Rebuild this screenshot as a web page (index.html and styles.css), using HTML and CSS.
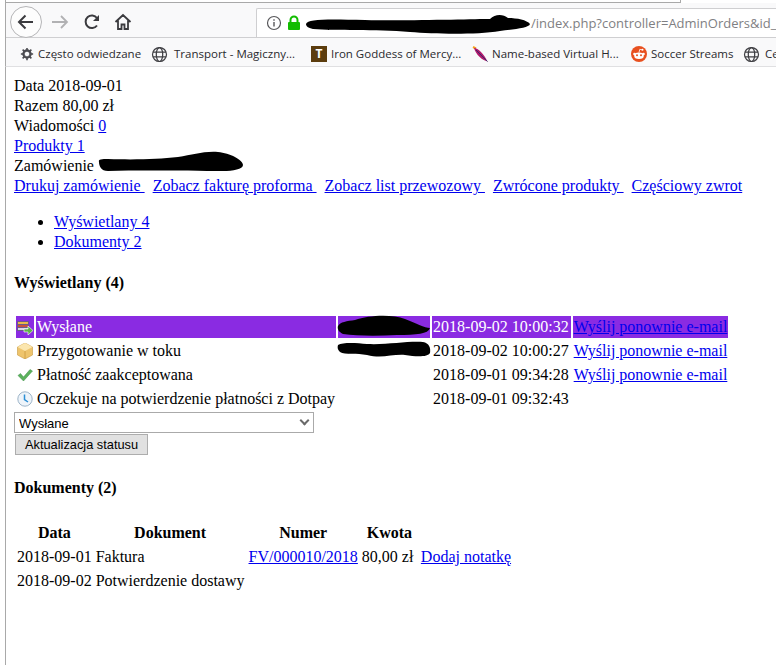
FILE: index.html
```html
<!DOCTYPE html>
<html lang="en">
<head>
    <meta charset="UTF-8">
    <meta name="viewport" content="width=device-width, initial-scale=1.0">
    <title>Zamówienie</title>
    <link rel="stylesheet" href="styles.css">
</head>
<body>
    <div class="tabstrip"></div>
    <div class="window">
        <div class="toolbar">
            <div class="nav-back">
                <svg width="20" height="20" viewBox="0 0 20 20"><path d="M17 10H3M9.500 3.500L3 10l6.500 6.500" fill="none" stroke="#3b3b3f" stroke-width="2"/></svg>
            </div>
            <svg class="nav-icon nav-forward" width="18" height="18" viewBox="0 0 18 18"><path d="M1 9h15M10 3l6 6-6 6" fill="none" stroke="#b1b1b3" stroke-width="1.800"/></svg>
            <svg class="nav-icon nav-reload" width="18" height="18" viewBox="0 0 18 18"><path d="M14 12.500A6.300 6.300 0 1 1 14 5" fill="none" stroke="#3b3b3f" stroke-width="2"/><path d="M16 2v6h-6z" fill="#3b3b3f"/></svg>
            <svg class="nav-icon nav-home" width="18" height="18" viewBox="0 0 18 18"><path d="M1.500 9L9 2l7.500 7M4 7.500V16h3.500v-4.500h3V16H14V7.500" fill="none" stroke="#3b3b3f" stroke-width="1.800"/></svg>
            <div class="urlbar">
                <svg class="url-icon" width="16" height="16" viewBox="0 0 16 16"><circle cx="8" cy="8" r="6.500" fill="none" stroke="#57575a" stroke-width="1.200"/><path d="M8 7v4.500M8 4.300v1.500" stroke="#57575a" stroke-width="1.400"/></svg>
                <svg class="url-icon lock" width="14" height="16" viewBox="0 0 14 16"><path d="M3.500 7V5a3.500 3.500 0 0 1 7 0v2" fill="none" stroke="#12bc00" stroke-width="2"/><rect x="1" y="7" width="12" height="8" rx="1" fill="#12bc00"/></svg>
                <svg class="url-icon scribble" width="226" height="22" viewBox="0 0 226 22"><path d="M1 12C3 7 20 7 60 8S170 7 185 7C190 2 198 2 203 6C212 6 222 8 225 12C224 16 210 17 195 19C170 23 130 22 105 20C70 17 30 19 8 17C3 16 1 14 1 12Z" fill="#000"/></svg>
                <span class="url-path">/index.php?controller=AdminOrders&amp;id_</span>
            </div>
        </div>
        <div class="bookmarks">
            <span class="bookmark bookmark-first">
                <svg width="14" height="16" viewBox="0 0 16 16"><circle cx="8" cy="8" r="4.200" fill="none" stroke="#4a4a4f" stroke-width="2.400"/><path d="M8 1v14M1 8h14M3 3l10 10M13 3L3 13" stroke="#4a4a4f" stroke-width="1.800"/><circle cx="8" cy="8" r="2.600" fill="#f9f9fa"/></svg>
                Często odwiedzane
            </span>
            <span class="bookmark bookmark-transport">
                <svg width="17" height="17" viewBox="0 0 18 18"><g fill="none" stroke="#3f3f43" stroke-width="1.300"><circle cx="9" cy="9" r="7.400"/><ellipse cx="9" cy="9" rx="3.400" ry="7.400"/><path d="M2 6.500h14M2 11.500h14"/></g></svg>
                Transport - Magiczny...
            </span>
            <span class="bookmark bookmark-iron">
                <span class="favicon-t">T</span>
                Iron Goddess of Mercy...
            </span>
            <span class="bookmark bookmark-apache">
                <svg width="16" height="16" viewBox="0 0 16 16"><path d="M1 1L4 2.500 1 1Z" stroke="#f6a11b" stroke-width="2"/><path d="M2 2C6 2 12 8 15.500 15.500C10 14 4 9 2 2Z" fill="#b0166b"/><path d="M4 4l11.500 11.500" stroke="#3a2a6b" stroke-width="1"/></svg>
                Name-based Virtual H...
            </span>
            <span class="bookmark bookmark-reddit">
                <svg width="16" height="16" viewBox="0 0 16 16"><circle cx="8" cy="8" r="8" fill="#e8501f"/><circle cx="3.500" cy="8" r="1.300" fill="#fff"/><circle cx="12.500" cy="8" r="1.300" fill="#fff"/><ellipse cx="8" cy="9.800" rx="4.800" ry="3.300" fill="#fff"/><circle cx="6" cy="9.200" r="1" fill="#e8501f"/><circle cx="10" cy="9.200" r="1" fill="#e8501f"/><path d="M8 6.500L8.800 3.300 11 3.800" fill="none" stroke="#fff" stroke-width=".8"/><circle cx="11.500" cy="3.800" r="1" fill="#fff"/></svg>
                Soccer Streams
            </span>
            <span class="bookmark bookmark-last">
                <svg width="17" height="17" viewBox="0 0 18 18"><g fill="none" stroke="#3f3f43" stroke-width="1.300"><circle cx="9" cy="9" r="7.400"/><ellipse cx="9" cy="9" rx="3.400" ry="7.400"/><path d="M2 6.500h14M2 11.500h14"/></g></svg>
                Ce
            </span>
        </div>
    </div>

    <div class="page">
        <div>Data 2018-09-01</div>
        <div>Razem 80,00 zł</div>
        <div>Wiadomości <a href="#">0</a></div>
        <div><a href="#">Produkty 1</a></div>
        <div class="order-line">Zamówienie
            <svg class="scribble-order" width="146" height="22" viewBox="0 0 146 22"><path d="M1 11C0 8 4 8 10 8C40 9 60 8 80 6C95 4 105 0 120 1C132 2 145 9 145 14C145 18 135 20 125 20C95 20 50 19 10 20C3 20 1 15 1 11Z" fill="#000"/></svg>
        </div>
        <div class="order-links">
            <a href="#">Drukuj zamówienie&nbsp;</a>
            <a href="#">Zobacz fakturę proforma&nbsp;</a>
            <a href="#">Zobacz list przewozowy&nbsp;</a>
            <a href="#">Zwrócone produkty&nbsp;</a>
            <a href="#">Częściowy zwrot</a>
        </div>

        <ul class="tabs">
            <li><a href="#">Wyświetlany 4</a></li>
            <li><a href="#">Dokumenty 2</a></li>
        </ul>

        <h4 class="section-title">Wyświetlany (4)</h4>
        <table class="history">
            <tr class="current">
                <td class="icon-cell">
                    <svg width="16" height="16" viewBox="0 0 16 16"><rect x="0" y="2" width="12" height="10" fill="#6d5a8c"/><rect x="1" y="3" width="10" height="2" fill="#e8b84a"/><rect x="1" y="6" width="10" height="2" fill="#c9503e"/><rect x="1" y="9" width="10" height="2" fill="#d9d4e6"/><path d="M7 10h4V7l5 4.500-5 4.500v-3H7z" fill="#5fb24a" stroke="#fff" stroke-width=".6"/></svg>
                </td>
                <td class="status-cell">Wysłane</td>
                <td class="employee-cell"><svg width="94" height="24" viewBox="0 0 94 24"><path d="M1 12C3 8 10 7 18 6C32 1 55 0 68 5C78 9 88 14 93 14C91 20 80 21 60 21C40 22 20 22 6 20C2 18 0 15 1 12Z" fill="#000"/></svg></td>
                <td class="date-cell">2018-09-02 10:00:32</td>
                <td><a href="#">Wyślij ponownie e-mail</a></td>
            </tr>
            <tr>
                <td class="icon-cell">
                    <svg width="16" height="16" viewBox="0 0 16 16"><path d="M8 0l7.500 4v8L8 16 .5 12V4z" fill="#eec46c" stroke="#c99a3f" stroke-width=".6"/><path d="M.5 4L8 8l7.500-4L8 0z" fill="#fbe6ae"/><path d="M8 8v8" stroke="#c99a3f" stroke-width=".8"/></svg>
                </td>
                <td>Przygotowanie w toku</td>
                <td class="employee-cell employee-next"><svg width="94" height="20" viewBox="0 0 94 20"><path d="M1 5C6 2 20 3 30 4C50 5 70 1 86 2C92 3 94 8 93 13C91 17 80 17 68 15C55 14 45 19 30 15C20 13 8 15 3 12C1 10 0 8 1 5Z" fill="#000"/></svg></td>
                <td class="date-cell">2018-09-02 10:00:27</td>
                <td><a href="#">Wyślij ponownie e-mail</a></td>
            </tr>
            <tr>
                <td class="icon-cell">
                    <svg width="16" height="16" viewBox="0 0 16 16"><path d="M1 8.500L3.500 6.500 6.500 10 13 2.500 15.500 4 6.500 14z" fill="#5cb25c" stroke="#3f8f4a" stroke-width=".5"/></svg>
                </td>
                <td>Płatność zaakceptowana</td>
                <td></td>
                <td class="date-cell">2018-09-01 09:34:28</td>
                <td><a href="#">Wyślij ponownie e-mail</a></td>
            </tr>
            <tr>
                <td class="icon-cell">
                    <svg width="16" height="16" viewBox="0 0 16 16"><circle cx="8" cy="8" r="7.200" fill="#eef4fa" stroke="#9db4c8"/><path d="M7.500 3.500V8.500L11 11" fill="none" stroke="#2d8fd5" stroke-width="1.500"/></svg>
                </td>
                <td>Oczekuje na potwierdzenie płatności z Dotpay</td>
                <td></td>
                <td class="date-cell">2018-09-01 09:32:43</td>
                <td></td>
            </tr>
        </table>

        <form class="status-form">
            <span class="select-wrap">
                <select class="status-select">
                    <option>Wysłane</option>
                </select>
            </span>
            <button type="button" class="status-button">Aktualizacja statusu</button>
        </form>

        <h4 class="section-title">Dokumenty (2)</h4>
        <table class="documents">
            <tr>
                <th>Data</th>
                <th>Dokument</th>
                <th>Numer</th>
                <th>Kwota</th>
                <th></th>
            </tr>
            <tr>
                <td>2018-09-01</td>
                <td>Faktura</td>
                <td><a href="#">FV/000010/2018</a></td>
                <td class="amount-cell">80,00 zł</td>
                <td><a href="#">Dodaj notatkę</a></td>
            </tr>
            <tr>
                <td>2018-09-02</td>
                <td>Potwierdzenie dostawy</td>
                <td></td>
                <td></td>
                <td></td>
            </tr>
        </table>
    </div>
</body>
</html>
```

FILE: styles.css
```css
html, body {
    margin: 0;
    height: 100%;
}
body {
    background: #fff;
    font-family: "Liberation Serif", serif;
    font-size: 16px;
    line-height: 20px;
    color: #000;
    overflow: hidden;
}
a {
    color: #0000ee;
}

/* browser chrome */
.tabstrip {
    width: 674px;
    height: 2px;
    margin-left: 5px;
    border-left: 1px solid #a9a9a9;
    border-right: 1px solid #a9a9a9;
    border-bottom: 1px solid #a9a9a9;
}
.window {
    margin-left: 5px;
    height: 64px;
    box-sizing: border-box;
    border-left: 1px solid #a9a9a9;
    border-bottom: 1px solid #e0e0e2;
    background: #f9f9fa;
    font-family: "Open Sans", sans-serif;
    font-size: 11.5px;
    color: #2a2a2e;
}
.toolbar {
    display: flex;
    align-items: center;
    height: 35px;
    border-bottom: 1px solid #cfcfd1;
    box-sizing: border-box;
    padding: 4px 0 0 4px;
}
.nav-back {
    width: 32px;
    height: 32px;
    border: 1px solid #b5b5b7;
    border-radius: 50%;
    background: #fdfdfd;
    box-sizing: border-box;
    display: flex;
    align-items: center;
    justify-content: center;
    flex: none;
}
.nav-icon {
    flex: none;
}
.nav-forward {
    margin-left: 9px;
}
.nav-reload {
    margin-left: 14px;
}
.nav-home {
    margin-left: 13px;
}
.urlbar {
    flex: 1;
    align-self: flex-end;
    min-width: 0;
    margin-left: 124px;
    height: 29px;
    background: #fff;
    border-left: 1px solid #cfcfd1;
    border-top: 1px solid #cfcfd1;
    border-radius: 2px 0 0 0;
    box-sizing: border-box;
    display: flex;
    align-items: center;
    padding-left: 9px;
    font-size: 13px;
    white-space: nowrap;
    overflow: hidden;
}
.url-icon {
    flex: none;
}
.lock {
    margin-left: 5px;
}
.scribble {
    margin-left: 4px;
}
.url-path {
    color: #7f7f83;
}
.bookmarks {
    display: flex;
    align-items: center;
    height: 28px;
    box-sizing: border-box;
    padding: 4px 0 0 14px;
    white-space: nowrap;
    overflow: hidden;
}
.bookmark {
    display: inline-flex;
    align-items: center;
    gap: 4px;
    flex: none;
}
.bookmark-first {
    width: 131px;
}
.bookmark-transport {
    width: 160px;
    gap: 6px;
}
.bookmark-iron {
    width: 161px;
}
.bookmark-apache {
    width: 159px;
}
.bookmark-reddit {
    width: 112px;
}
.bookmark-last {
    gap: 5px;
}
.favicon-t {
    width: 16px;
    height: 16px;
    background: #5c3d0e;
    color: #fff;
    font-weight: bold;
    font-size: 12px;
    line-height: 16px;
    text-align: center;
}

/* page */
.page {
    margin-left: 5px;
    border-left: 1px solid #a9a9a9;
    padding: 9px 0 0 8px;
    height: 598px;
    box-sizing: border-box;
}
.order-line {
    position: relative;
}
.scribble-order {
    position: absolute;
    left: 84px;
    top: -5px;
}
.order-links a {
    margin-right: 4px;
}
.tabs {
    margin: 16px 0;
    padding-left: 40px;
}
.section-title {
    margin: 21px 0;
    font-size: 16px;
    font-weight: bold;
}
.history {
    border-spacing: 2px;
}
.history td {
    padding: 1px;
    white-space: nowrap;
}
.history .current td {
    background: #8a2be2;
    color: #fff;
}
.history .status-cell {
    min-width: 296px;
}
.history .date-cell {
    padding-right: 2px;
}
.employee-cell {
    position: relative;
    width: 90px;
}
.employee-cell svg {
    position: absolute;
    left: -1px;
    top: -2px;
}
.employee-next svg {
    top: 0;
}
.icon-cell svg {
    display: block;
}
.history .current a {
    color: #0000ee;
}
.status-form {
    display: flex;
    flex-direction: column;
    align-items: flex-start;
    padding-bottom: 2px;
}
.select-wrap {
    position: relative;
    display: block;
    height: 21px;
}
.select-wrap::after {
    content: "";
    position: absolute;
    right: 6px;
    top: 5px;
    width: 5px;
    height: 5px;
    border-right: 2px solid #6a6a6a;
    border-bottom: 2px solid #6a6a6a;
    transform: rotate(45deg);
}
.status-select {
    display: block;
    width: 300px;
    height: 21px;
    border: 1px solid #aaa;
    border-radius: 0;
    appearance: none;
    background: #fff;
    font-family: "Liberation Sans", sans-serif;
    font-size: 13px;
    padding: 2px 0 0 4px;
}
.status-button {
    margin: 1px 0 0 1px;
    height: 21px;
    padding: 0 9px;
    border: 1px solid #adadad;
    background: #e1e1e1;
    font-family: "Liberation Sans", sans-serif;
    font-size: 12.8px;
    color: #000;
}
.documents {
    border-spacing: 2px;
    margin-top: 22px;
}
.documents td, .documents th {
    padding: 1px;
    white-space: nowrap;
}
.documents .amount-cell {
    width: 55px;
}
```
